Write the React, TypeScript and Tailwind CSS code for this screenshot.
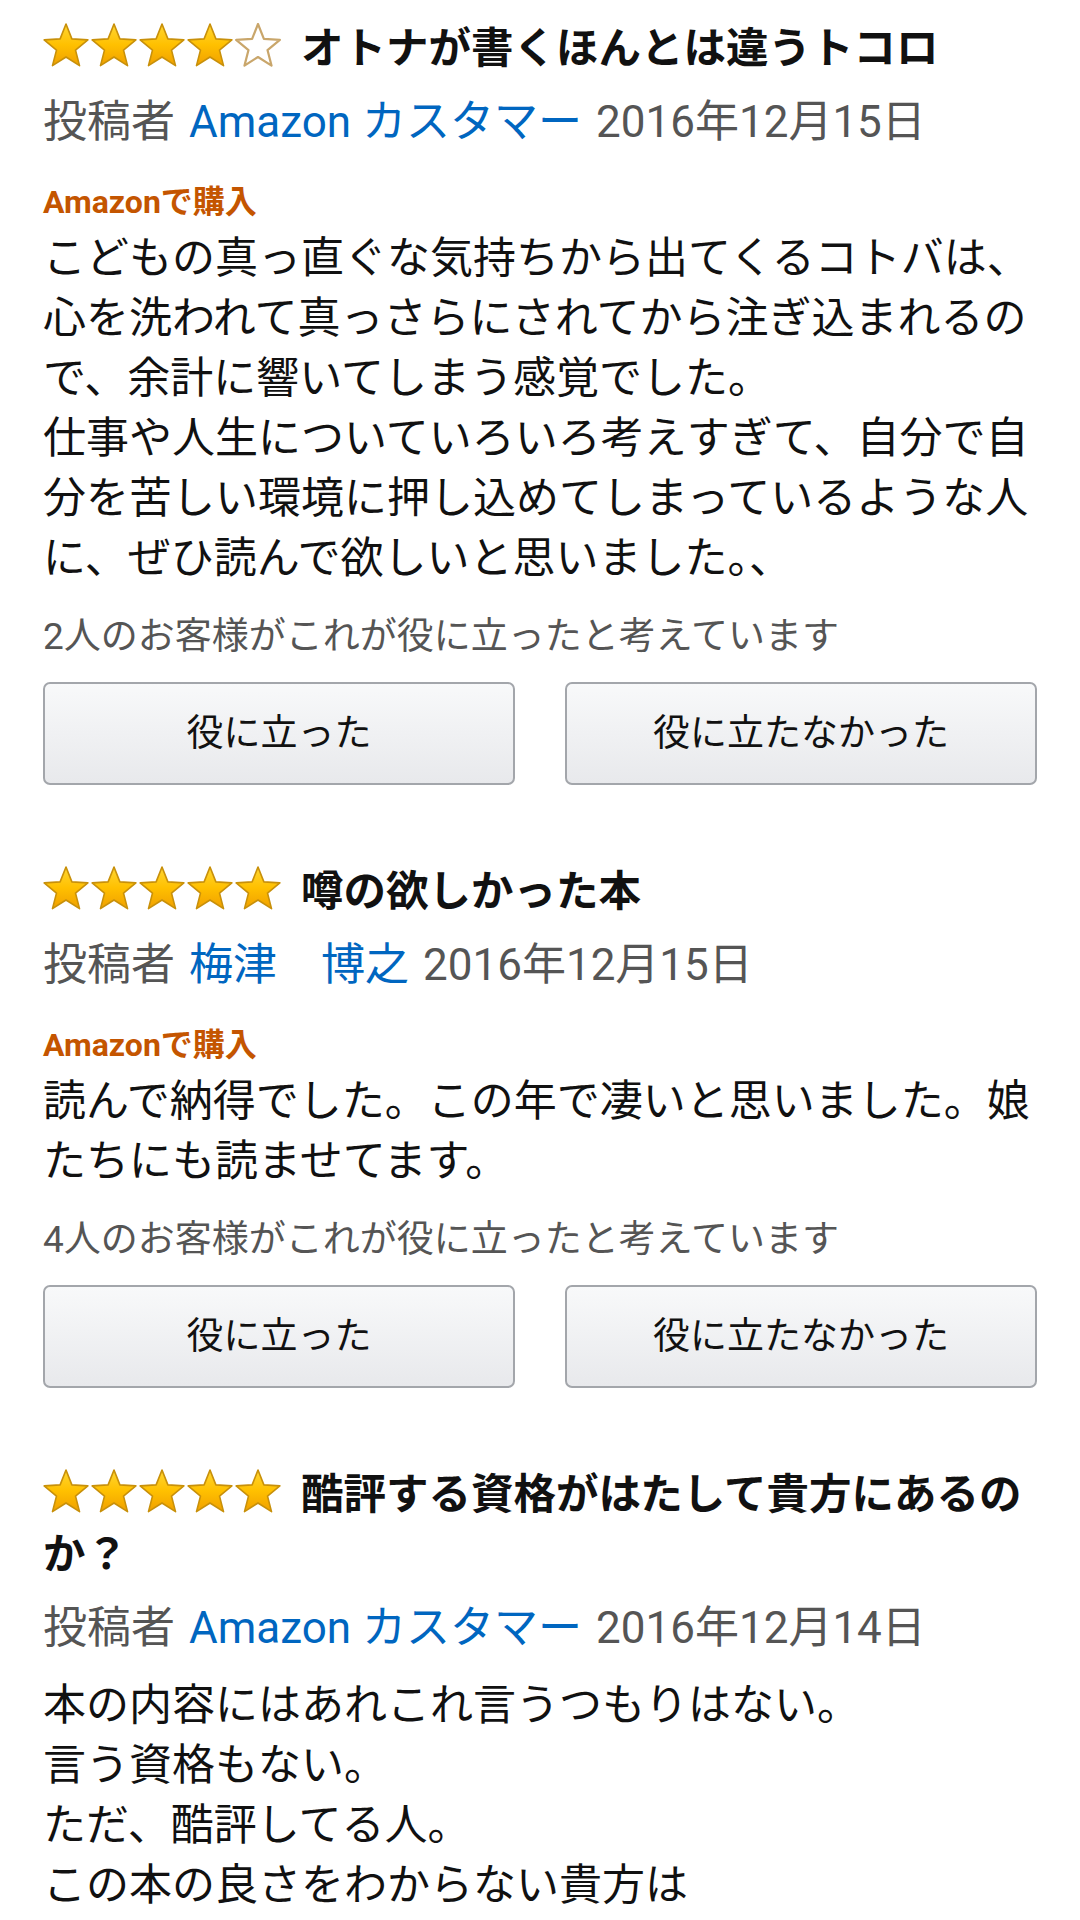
import React from "react";

const STAR =
  "M24 1 L29.88 15.91 L45.87 16.89 L33.51 27.09 L37.52 42.61 L24 34 L10.48 42.61 L14.49 27.09 L2.13 16.89 L18.12 15.91 Z";

function Stars({ n }: { n: number }) {
  return (
    <svg
      width="240"
      height="44"
      viewBox="0 0 240 44"
      className="inline-block mr-[18px] align-[-4px]"
    >
      <defs>
        <linearGradient id="gold" x1="0" y1="0" x2="0" y2="1">
          <stop offset="0" stopColor="#ffd633" />
          <stop offset="0.5" stopColor="#ffc000" />
          <stop offset="1" stopColor="#f0a000" />
        </linearGradient>
      </defs>
      {[0, 1, 2, 3, 4].map((i) => (
        <g key={i} transform={`translate(${i * 48 - 1} 0)`}>
          <path
            d={STAR}
            fill={i < n ? "url(#gold)" : "#ffffff"}
            stroke={i < n ? "#c8900a" : "#c9a66b"}
            strokeWidth={i < n ? 1.6 : 2.2}
            strokeLinejoin="round"
          />
        </g>
      ))}
    </svg>
  );
}

function Buttons() {
  return (
    <div className="mt-[21px] flex gap-[50px]">
      <button className="h-[103px] flex-1 rounded-[7px] border-2 border-[#a3a6ab] bg-gradient-to-b from-[#f8f9fa] to-[#e8e9ec] text-[37px] text-[#111]">
        役に立った
      </button>
      <button className="h-[103px] flex-1 rounded-[7px] border-2 border-[#a3a6ab] bg-gradient-to-b from-[#f8f9fa] to-[#e8e9ec] text-[37px] text-[#111]">
        役に立たなかった
      </button>
    </div>
  );
}

type ReviewProps = {
  stars: number;
  title: string;
  author: string;
  date: string;
  verified: boolean;
  body: string[];
  helpful?: string;
  className?: string;
};

function Review({ stars, title, author, date, verified, body, helpful, className }: ReviewProps) {
  return (
    <section className={className}>
      <h2 className="text-[42.5px] leading-[60px] font-bold text-[#111]">
        <Stars n={stars} />
        {title}
      </h2>
      <p className="mt-[13px] whitespace-nowrap text-[44px] leading-[60px] text-[#555]">
        投稿者
        <span className="ml-[14px] text-[#0066c0]">{author}</span>
        <span className="ml-[14px]">{date}</span>
      </p>
      {verified ? (
        <>
          <p className="mt-[30px] text-[32px] leading-[40px] font-bold text-[#c45500]">
            Amazonで購入
          </p>
          <div className="mt-[6px] text-[43px] leading-[60px] text-[#111]">
            {body.map((l, i) => (
              <p key={i}>{l}</p>
            ))}
          </div>
        </>
      ) : (
        <div className="mt-[17px] text-[43px] leading-[60px] text-[#111]">
          {body.map((l, i) => (
            <p key={i}>{l}</p>
          ))}
        </div>
      )}
      {helpful && (
        <>
          <p className="mt-[25px] text-[37px] leading-[48px] text-[#555]">{helpful}</p>
          <Buttons />
        </>
      )}
    </section>
  );
}

export default function App() {
  return (
    <div className="h-[1920px] w-[1080px] overflow-hidden bg-white px-[43px] pt-[19px] font-[Roboto,'Noto_Sans_CJK_JP',sans-serif]">
      <Review
        stars={4}
        title="オトナが書くほんとは違うトコロ"
        author="Amazon カスタマー"
        date="2016年12月15日"
        verified
        body={[
          "こどもの真っ直ぐな気持ちから出てくるコトバは、心を洗われて真っさらにされてから注ぎ込まれるので、余計に響いてしまう感覚でした。",
          "仕事や人生についていろいろ考えすぎて、自分で自分を苦しい環境に押し込めてしまっているような人に、ぜひ読んで欲しいと思いました。、",
        ]}
        helpful="2人のお客様がこれが役に立ったと考えています"
      />
      <Review
        className="mt-[77px]"
        stars={5}
        title="噂の欲しかった本"
        author="梅津　博之"
        date="2016年12月15日"
        verified
        body={["読んで納得でした。この年で凄いと思いました。娘たちにも読ませてます。"]}
        helpful="4人のお客様がこれが役に立ったと考えています"
      />
      <Review
        className="mt-[77px]"
        stars={5}
        title="酷評する資格がはたして貴方にあるのか？"
        author="Amazon カスタマー"
        date="2016年12月14日"
        verified={false}
        body={[
          "本の内容にはあれこれ言うつもりはない。",
          "言う資格もない。",
          "ただ、酷評してる人。",
          "この本の良さをわからない貴方は",
        ]}
      />
    </div>
  );
}
